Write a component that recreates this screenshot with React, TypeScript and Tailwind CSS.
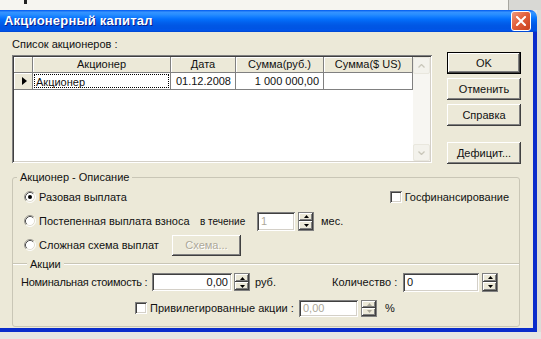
import React from "react";

const raised =
  "bg-[#ECE9D8] shadow-[inset_-1px_-1px_0_#404040,inset_1px_1px_0_#ffffff,inset_-2px_-2px_0_#808080]";
const sunken =
  "bg-white shadow-[inset_1px_1px_0_#808080,inset_-1px_-1px_0_#ffffff,inset_2px_2px_0_#404040,inset_-2px_-2px_0_#D4D0C8]";

const Btn = ({
  children,
  def,
  disabled,
  className = "",
}: {
  children: React.ReactNode;
  def?: boolean;
  disabled?: boolean;
  className?: string;
}) => (
  <div className={`shrink-0 ${def ? "border border-black" : ""} ${className}`}>
    <div
      className={`h-full w-full flex items-center justify-center leading-[13px] ${raised} ${
        disabled ? "text-[#ACA899] [text-shadow:1px_1px_0_#fff]" : ""
      }`}
    >
      {children}
    </div>
  </div>
);

const Radio = ({ checked }: { checked?: boolean }) => (
  <svg width="12" height="12" viewBox="0 0 12 12" className="shrink-0">
    <circle cx="6" cy="6" r="5" fill="#fff" />
    <path d="M2.11 9.89A5.5 5.5 0 0 1 9.89 2.11" fill="none" stroke="#9A9890" />
    <path d="M2.82 9.18A4.5 4.5 0 0 1 9.18 2.82" fill="none" stroke="#505050" />
    <path d="M9.89 2.11A5.5 5.5 0 0 1 2.11 9.89" fill="none" stroke="#fff" />
    <path d="M9.18 2.82A4.5 4.5 0 0 1 2.82 9.18" fill="none" stroke="#E2DFD3" />
    {checked && <circle cx="6" cy="6" r="2" fill="#000" />}
  </svg>
);

const Check = () => <span className={`w-[12px] h-[12px] shrink-0 ${sunken}`} />;

const Arrow = ({ up, color }: { up?: boolean; color: string }) => (
  <svg width="5" height="3" viewBox="0 0 5 3">
    <path d={up ? "M2.5 0L5 3H0z" : "M0 0H5L2.5 3z"} fill={color} />
  </svg>
);

const Spin = ({ disabled, className = "" }: { disabled?: boolean; className?: string }) => {
  const c = disabled ? "#ACA899" : "#000";
  return (
    <div className={`w-[16px] shrink-0 flex flex-col border border-[#808080] ${className}`}>
      <div className={`flex-1 flex items-center justify-center ${raised}`}>
        <Arrow up color={c} />
      </div>
      <div className={`flex-1 flex items-center justify-center ${raised}`}>
        <Arrow color={c} />
      </div>
    </div>
  );
};

const Field = ({
  value,
  right,
  disabled,
  className = "",
}: {
  value: string;
  right?: boolean;
  disabled?: boolean;
  className?: string;
}) => (
  <div
    className={`shrink-0 flex items-center px-[4px] leading-[13px] ${sunken} ${right ? "justify-end" : ""} ${
      disabled ? "text-[#ACA899]" : ""
    } ${className}`}
  >
    {value}
  </div>
);

const ScrollBtn = ({ up }: { up?: boolean }) => (
  <div className="h-[17px] flex items-center justify-center rounded-[2px] border border-[#E9E7DE] bg-[#F3F2EC]">
    <svg width="7" height="4" viewBox="0 0 7 4">
      <path
        d={up ? "M0.5 3.5L3.5 0.5L6.5 3.5" : "M0.5 0.5L3.5 3.5L6.5 0.5"}
        fill="none"
        stroke="#C9C7BA"
        strokeWidth="1.3"
      />
    </svg>
  </div>
);

const head = "bg-[#ECE9D8] border-r border-b border-[#808080] shadow-[inset_1px_1px_0_#fff] text-center leading-[15px]";
const cell = "border-r border-b border-[#808080] leading-[16px]";

const Grid = () => (
  <div className={`mt-[4px] h-[108px] flex p-[2px] ${sunken}`}>
    <div className="w-[399px] flex flex-col">
      <div className="h-[16px] flex">
        <div className={`w-[19px] ${head}`} />
        <div className={`w-[138px] ${head}`}>Акционер</div>
        <div className={`w-[65px] ${head}`}>Дата</div>
        <div className={`w-[88px] ${head}`}>Сумма(руб.)</div>
        <div className={`w-[89px] ${head}`}>Сумма($ US)</div>
      </div>
      <div className="h-[17px] flex">
        <div className={`w-[19px] flex items-center pl-[8px] ${head}`}>
          <svg width="5" height="8" viewBox="0 0 5 8">
            <path d="M0 0L5 4L0 8z" fill="#000" />
          </svg>
        </div>
        <div className={`w-[138px] ${cell} p-px`}>
          <div className="h-full border border-dotted border-black pl-[1px] leading-[14px]">Акционер</div>
        </div>
        <div className={`w-[65px] text-right pr-[4px] ${cell}`}>01.12.2008</div>
        <div className={`w-[88px] text-right pr-[4px] ${cell}`}>1 000 000,00</div>
        <div className={`w-[89px] ${cell}`} />
      </div>
    </div>
    <div className="w-[17px] flex flex-col bg-[#F7F6F2]">
      <ScrollBtn up />
      <div className="flex-1" />
      <ScrollBtn />
    </div>
  </div>
);

export default function App() {
  return (
    <div className="w-[541px] h-[339px] overflow-hidden whitespace-nowrap bg-[#E6E6E3] font-['Liberation_Sans',Arial,sans-serif] text-[11px] text-[#111] flex flex-col">
      <div className="h-[10px] flex shrink-0">
        <div className="w-[509px] bg-[#F6F5F0] border-r border-[#A7A6A0]">
          <div className="ml-[24px] w-[3px] h-[4px] bg-[#222]" />
        </div>
        <div className="flex-1 bg-[#D8D8D4]" />
      </div>

      <div className="flex shrink-0">
        <div className="w-[537px] flex flex-col">
          <div className="h-[22px] flex items-center rounded-tr-[7px] bg-[linear-gradient(to_bottom,#0058EE_0%,#3593FF_10%,#288EFF_20%,#127DFF_32%,#036FFC_42%,#0262EE_55%,#0057E5_70%,#0054E3_85%,#0055EB_92%,#0046CF_100%)]">
            <div className="pl-[4px] text-white font-bold text-[13px] tracking-[0.2px] [text-shadow:1px_1px_0_#0A1E8C]">
              Акционерный капитал
            </div>
            <div className="ml-auto mr-[6px] w-[20px] h-[20px] rounded-[3px] border border-white flex items-center justify-center bg-[linear-gradient(135deg,#EE9A7E_0%,#E2603C_45%,#C8401C_100%)]">
              <svg width="10" height="10" viewBox="0 0 10 10">
                <path d="M1 1L9 9M9 1L1 9" stroke="#fff" strokeWidth="2" strokeLinecap="square" />
              </svg>
            </div>
          </div>

          <div className="h-[300px] bg-[#ECE9D8] border-r-4 border-b-4 border-[#0A2CCB] flex flex-col">
            <div className="flex pl-[12px]">
              <div className="w-[420px] flex flex-col">
                <div className="mt-[6px] h-[13px] leading-[13px]">Список акционеров :</div>
                <Grid />
              </div>
              <div className="ml-[15px] w-[74px] pt-[20px] flex flex-col">
                <Btn def className="h-[22px]">OK</Btn>
                <Btn className="h-[22px] mt-[4px]">Отменить</Btn>
                <Btn className="h-[22px] mt-[4px]">Справка</Btn>
                <Btn className="h-[22px] mt-[16px]">Дефицит...</Btn>
              </div>
            </div>

            <fieldset className="ml-[12px] mt-[6px] w-[508px] border border-[#C9C6B6] rounded-[3px] p-0 pb-[3px]">
              <legend className="ml-[4px] px-[3px] leading-[14px]">Акционер - Описание</legend>

              <div className="mt-[1px] h-[24px] flex items-center pl-[11px]">
                <Radio checked />
                <span className="ml-[3px] leading-[13px]">Разовая выплата</span>
                <div className="ml-auto mr-[10px] flex items-center">
                  <Check />
                  <span className="ml-[3px] leading-[13px]">Госфинансирование</span>
                </div>
              </div>

              <div className="h-[24px] flex items-center pl-[11px]">
                <div className="w-[176px] shrink-0 flex items-center">
                  <Radio />
                  <span className="ml-[3px] leading-[13px]">Постепенная выплата взноса</span>
                </div>
                <span className="w-[57px] shrink-0 text-[10px] leading-[13px]">в течение</span>
                <Field value="1" disabled className="w-[38px] h-[19px]" />
                <Spin className="ml-[3px] h-[19px]" />
                <span className="ml-[7px] leading-[13px]">мес.</span>
              </div>

              <div className="h-[24px] flex items-center pl-[11px]">
                <div className="w-[148px] shrink-0 flex items-center">
                  <Radio />
                  <span className="ml-[3px] leading-[13px]">Сложная схема выплат</span>
                </div>
                <Btn disabled className="w-[69px] h-[21px]">Схема...</Btn>
              </div>

              <div className="h-[14px] flex items-center">
                <div className="w-[14px] h-[2px] border-t border-b border-t-[#C9C6B6] border-b-white" />
                <span className="px-[3px] leading-[14px]">Акции</span>
                <div className="flex-1 h-[2px] border-t border-b border-t-[#C9C6B6] border-b-white" />
              </div>

              <div className="h-[22px] flex items-center pl-[8px]">
                <span className="w-[131px] shrink-0 leading-[13px] tracking-[-0.25px]">Номинальная стоимость :</span>
                <Field value="0,00" right className="w-[80px] h-[18px]" />
                <Spin className="ml-[2px] h-[18px]" />
                <span className="ml-[5px] w-[77px] shrink-0 leading-[13px]">руб.</span>
                <span className="w-[71px] shrink-0 leading-[13px]">Количество :</span>
                <Field value="0" className="w-[76px] h-[19px]" />
                <Spin className="ml-[3px] h-[19px]" />
              </div>

              <div className="h-[30px] flex items-center pl-[122px]">
                <Check />
                <span className="ml-[3px] w-[149px] shrink-0 leading-[13px]">Привилегированные акции :</span>
                <Field value="0,00" disabled className="w-[59px] h-[17px]" />
                <Spin disabled className="ml-[3px] h-[17px]" />
                <span className="ml-[8px] leading-[13px]">%</span>
              </div>
            </fieldset>
          </div>
        </div>
        <div className="flex-1 bg-[#DCDCD8]" />
      </div>
    </div>
  );
}
